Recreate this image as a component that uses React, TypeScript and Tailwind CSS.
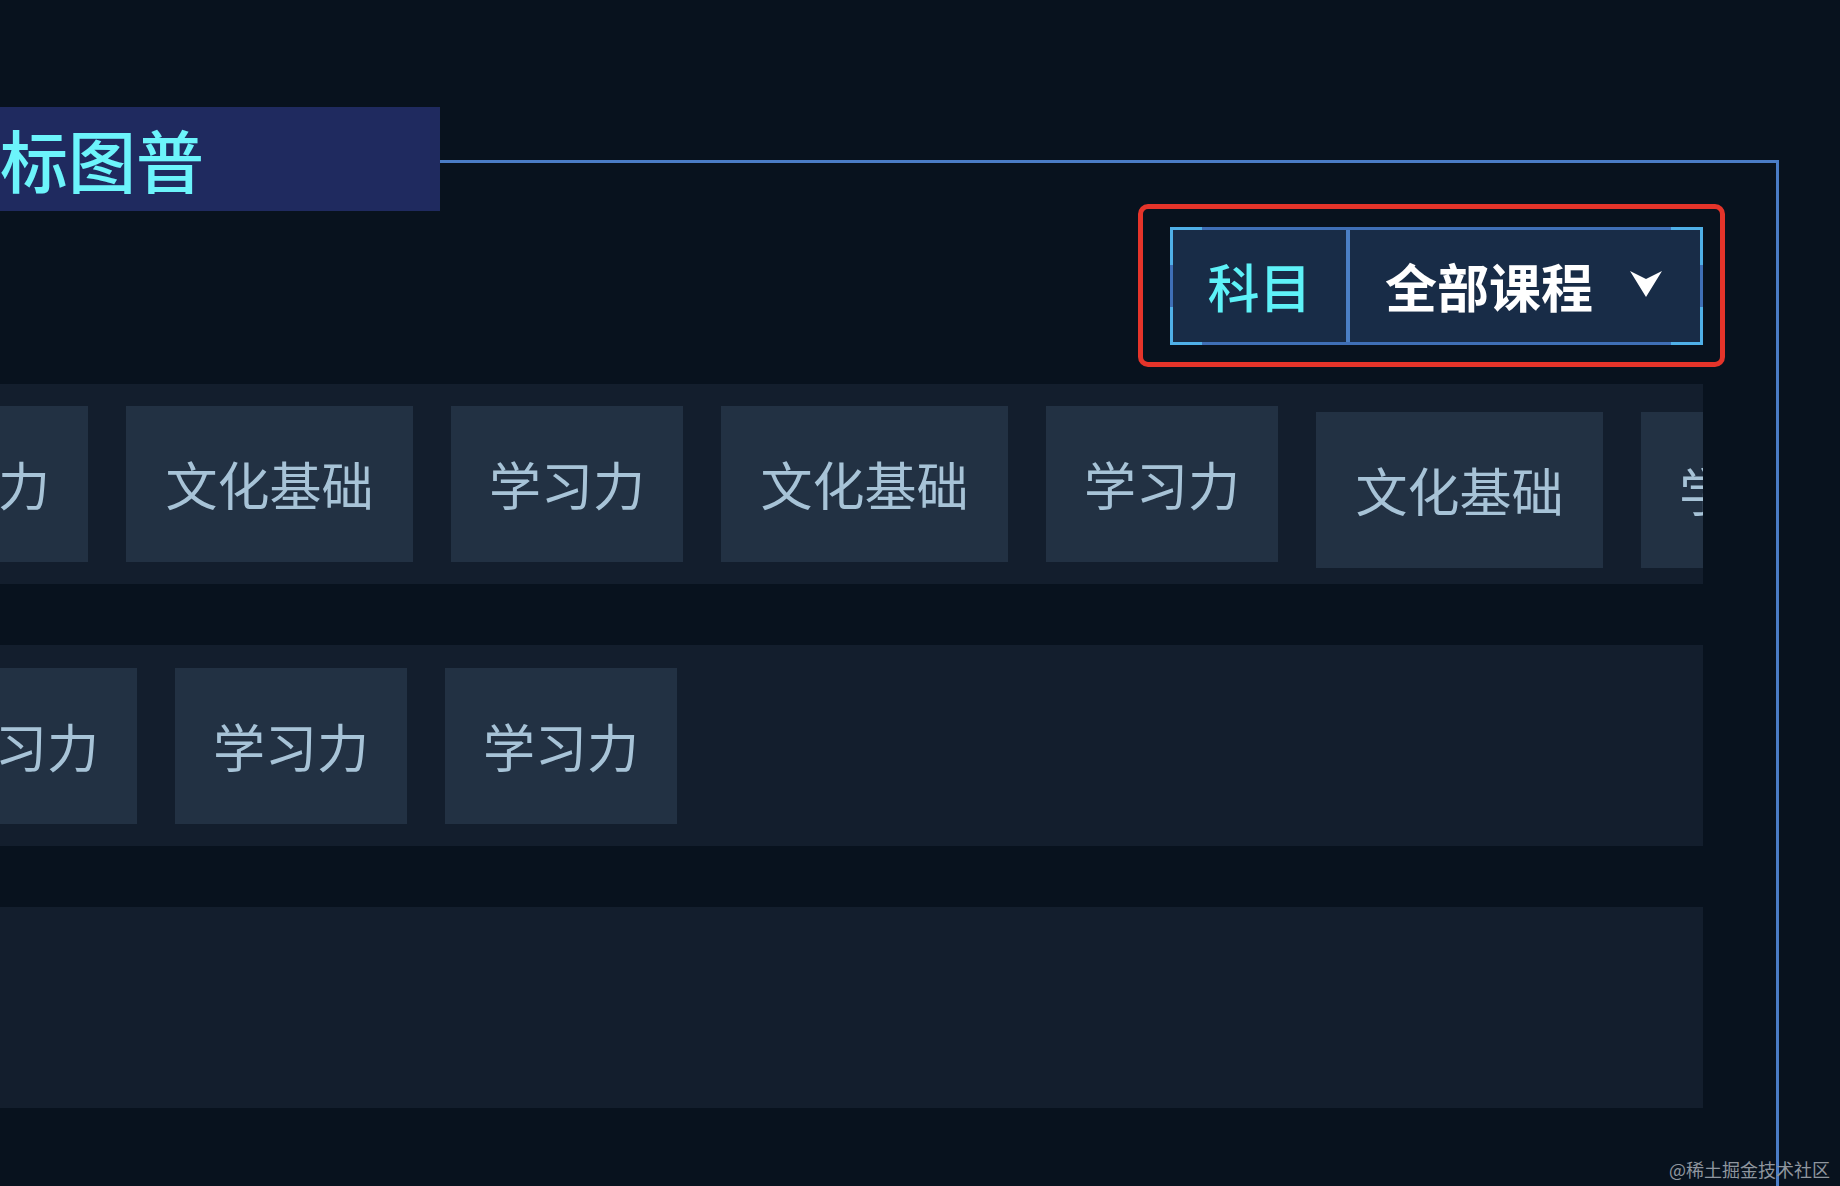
import React from "react";

type Chip = { label: string; lift?: boolean };

const rowOne: Chip[] = [
  { label: "学习力" },
  { label: "文化基础" },
  { label: "学习力" },
  { label: "文化基础" },
  { label: "学习力" },
  { label: "文化基础", lift: true },
  { label: "学习力", lift: true },
];

const rowTwo: Chip[] = [{ label: "学习力" }, { label: "学习力" }, { label: "学习力" }];

function TagChip({ chip }: { chip: Chip }) {
  const wide = chip.label.length > 3;
  return (
    <div
      className={`flex h-[156px] shrink-0 items-center justify-center bg-[#223143] text-[52px] leading-none font-normal text-[#a7c3d7] ${
        wide ? "w-[287px]" : "w-[232px]"
      } ${chip.lift ? "translate-y-[6px]" : ""}`}
    >
      {chip.label}
    </div>
  );
}

function Corner({ pos }: { pos: string }) {
  return <div className={`pointer-events-none absolute h-[38px] w-[32px] border-[#4fb0e8] ${pos}`} />;
}

function SubjectSelect() {
  return (
    <div className="relative flex h-[118px] w-[533px] border-[3px] border-[#3f6fb6] bg-[#182c47]">
      <Corner pos="-left-[3px] -top-[3px] border-l-[3px] border-t-[3px]" />
      <Corner pos="-right-[3px] -top-[3px] border-r-[3px] border-t-[3px]" />
      <Corner pos="-left-[3px] -bottom-[3px] border-l-[3px] border-b-[3px]" />
      <Corner pos="-right-[3px] -bottom-[3px] border-r-[3px] border-b-[3px]" />
      <div className="flex w-[177px] items-center justify-center border-r-[4px] border-[#4b7fc4] text-[52px] leading-none font-medium text-[#5ef2f8]">
        科目
      </div>
      <div className="flex flex-1 items-center justify-between pl-[35px] pr-[37px]">
        <span className="text-[52px] leading-none font-bold text-white">全部课程</span>
        <svg width="34" height="28" viewBox="0 0 34 28" className="mt-[-4px]">
          <polygon points="1,1 17,27 33,1 17,9" fill="#ffffff" />
        </svg>
      </div>
    </div>
  );
}

export default function App() {
  return (
    <div className="relative h-[1186px] w-full overflow-hidden bg-[#08121e] font-['Noto_Sans_CJK_SC','Noto_Sans',sans-serif]">
      {/* title banner sits over the panel's top line */}
      <div className="absolute left-0 top-[107px] z-10 flex h-[104px] w-[440px] items-center bg-[#1f2a5f]">
        <span className="text-[68px] leading-none font-medium text-[#6cf4fb]">标图普</span>
      </div>

      <div className="mt-[160px] h-[1026px] w-[1779px] border-r-[3px] border-t-[3px] border-[#4a7cc6] pt-[41px]">
        <div className="flex justify-end pr-[51px]">
          <div className="rounded-[10px] border-[5px] border-[#e5342a] pb-[17px] pl-[27px] pr-[17px] pt-[18px]">
            <SubjectSelect />
          </div>
        </div>

        <div className="mt-[17px] flex w-[1703px] flex-col gap-[61px]">
          <div className="flex h-[200px] items-start overflow-hidden bg-[#131e2d] pt-[22px]">
            <div className="ml-[-144px] flex gap-[38px]">
              {rowOne.map((c, i) => (
                <TagChip key={i} chip={c} />
              ))}
            </div>
          </div>
          <div className="flex h-[201px] items-start overflow-hidden bg-[#131e2d] pt-[23px]">
            <div className="ml-[-95px] flex gap-[38px]">
              {rowTwo.map((c, i) => (
                <TagChip key={i} chip={c} />
              ))}
            </div>
          </div>
          <div className="h-[201px] bg-[#131e2d]" />
        </div>
      </div>

      <div className="absolute bottom-[8px] right-[10px] text-[18px] leading-none text-[#8f969f]">
        @稀土掘金技术社区
      </div>
    </div>
  );
}
